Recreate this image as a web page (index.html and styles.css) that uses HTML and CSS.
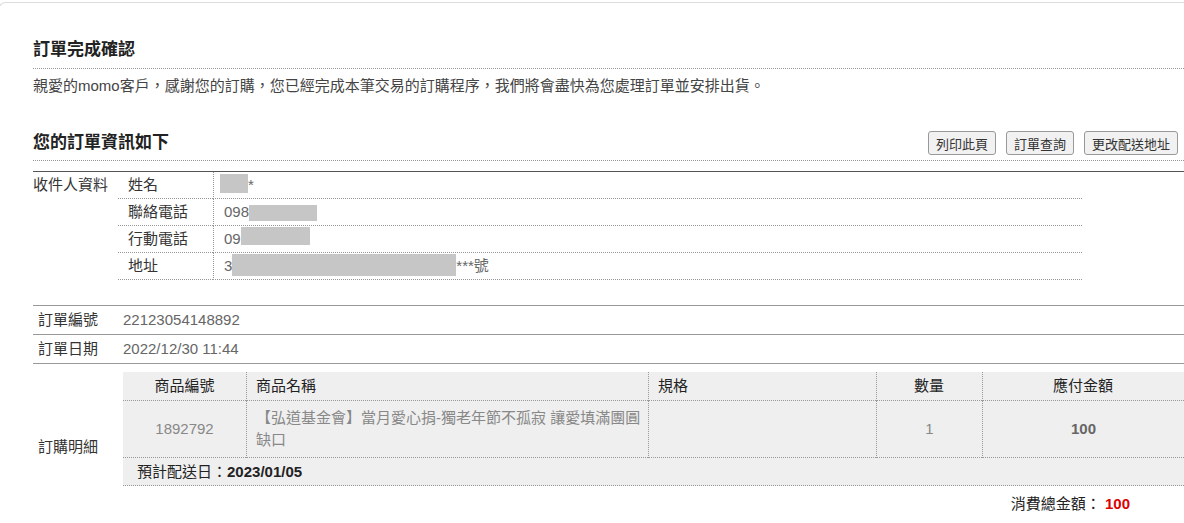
FILE: index.html
```html
<!DOCTYPE html>
<html lang="zh-Hant">
<head>
  <meta charset="UTF-8" />
  <meta name="viewport" content="width=device-width, initial-scale=1.0"/>
  <title>訂單完成確認</title>
  <link rel="stylesheet" href="styles.css">
</head>
<body>

  <div class="page">

    <h2 class="page-title">訂單完成確認</h2>
    <p class="intro">親愛的momo客戶，感謝您的訂購，您已經完成本筆交易的訂購程序，我們將會盡快為您處理訂單並安排出貨。</p>

    <div class="info-head">
      <h3>您的訂單資訊如下</h3>
      <div class="actions">
        <button type="button" class="btn">列印此頁</button>
        <button type="button" class="btn">訂單查詢</button>
        <button type="button" class="btn">更改配送地址</button>
      </div>
    </div>

    <div class="receiver-box">
      <table class="receiver">
        <colgroup>
          <col class="c-group">
          <col class="c-key">
          <col>
        </colgroup>
        <tr>
          <td class="group" rowspan="4">收件人資料</td>
          <td class="key">姓名</td>
          <td class="val"><span class="mask mask-name"></span>*</td>
        </tr>
        <tr>
          <td class="key">聯絡電話</td>
          <td class="val">098<span class="mask mask-phone"></span></td>
        </tr>
        <tr>
          <td class="key">行動電話</td>
          <td class="val">09<span class="mask mask-mobile"></span></td>
        </tr>
        <tr>
          <td class="key">地址</td>
          <td class="val">3<span class="mask mask-addr"></span>***號</td>
        </tr>
      </table>
    </div>

    <table class="order">
      <colgroup>
        <col class="c-label">
        <col>
      </colgroup>
      <tr>
        <td class="label">訂單編號</td>
        <td class="value">22123054148892</td>
      </tr>
      <tr>
        <td class="label">訂單日期</td>
        <td class="value">2022/12/30 11:44</td>
      </tr>
      <tr>
        <td class="label">訂購明細</td>
        <td class="detail">
          <table class="items">
            <colgroup>
              <col class="c-no">
              <col class="c-name">
              <col class="c-spec">
              <col class="c-qty">
              <col>
            </colgroup>
            <thead>
              <tr>
                <th class="center">商品編號</th>
                <th>商品名稱</th>
                <th>規格</th>
                <th class="center">數量</th>
                <th class="center">應付金額</th>
              </tr>
            </thead>
            <tbody>
              <tr class="item">
                <td class="center">1892792</td>
                <td class="name">【弘道基金會】當月愛心捐-獨老年節不孤寂 讓愛填滿團圓缺口</td>
                <td></td>
                <td class="center">1</td>
                <td class="center price">100</td>
              </tr>
              <tr>
                <td class="ship" colspan="5">預計配送日：<b>2023/01/05</b></td>
              </tr>
            </tbody>
          </table>
          <div class="total">消費總金額： <b>100</b></div>
        </td>
      </tr>
    </table>

  </div>

</body>
</html>
```

FILE: styles.css
```css
body {
  margin: 0;
  font-family: "Liberation Sans", "Noto Sans CJK TC", sans-serif;
  font-size: 15px;
  color: #333;
  background: #fff;
}

.page {
  margin: 2px 0 0 -2px;
  padding-left: 34px;
  border-top: 1px solid #ddd;
  border-left: 1px solid #ddd;
  border-top-left-radius: 8px;
}

.page-title {
  margin: 35px 0 0;
  padding-bottom: 6px;
  font-size: 17px;
  line-height: 24px;
  color: #222;
  border-bottom: 1px dotted #999;
}

.intro {
  margin: 7px 0 0;
  line-height: 20px;
  color: #444;
}

.info-head {
  display: flex;
  align-items: center;
  justify-content: space-between;
  margin-top: 35px;
  padding: 0 6px 5px 0;
  border-bottom: 1px dotted #999;
}

.info-head h3 {
  margin: 0;
  font-size: 17px;
  line-height: 24px;
  color: #222;
}

.actions {
  display: flex;
}

.btn {
  height: 24px;
  margin-left: 10px;
  padding: 0 7px;
  font-family: inherit;
  font-size: 13px;
  color: #333;
  background: #f1f1f1;
  border: 1px solid #999;
  border-radius: 3px;
  cursor: pointer;
}

.btn:hover {
  background: #e4e4e4;
}

/* 收件人資料 */
.receiver-box {
  margin-top: 10px;
  border-top: 1px solid #555;
}

.receiver {
  width: 1049px;
  border-collapse: separate;
  border-spacing: 0;
  table-layout: fixed;
}

.receiver .c-group { width: 85px; }
.receiver .c-key { width: 95px; }

.receiver td {
  padding: 0;
  line-height: 26px;
}

.receiver .group {
  vertical-align: top;
}

.receiver .key {
  padding-left: 10px;
  border-bottom: 1px dotted #999;
}

.receiver .val {
  padding-left: 10px;
  color: #666;
  border-left: 1px dotted #999;
  border-bottom: 1px dotted #999;
}

.mask {
  display: inline-block;
  background: #c6c6c6;
}

.mask-name { width: 28px; height: 19px; margin-left: -4px; vertical-align: -3px; }
.mask-phone { width: 68px; height: 16px; vertical-align: -4px; }
.mask-mobile { width: 69px; height: 18px; vertical-align: -1px; }
.mask-addr { width: 224px; height: 22px; vertical-align: -5px; }

/* 訂單資料 */
.order {
  width: 100%;
  margin-top: 25px;
  border-collapse: collapse;
  border-top: 1px solid #999;
  table-layout: fixed;
}

.order .c-label { width: 90px; }

.order > tbody > tr {
  border-bottom: 1px solid #999;
}

.order > tbody > tr:last-child {
  border-bottom: none;
}

.order td {
  padding: 0;
  line-height: 28px;
}

.order .label {
  padding-left: 5px;
  vertical-align: middle;
}

.order .value {
  color: #666;
}

.order .detail {
  padding: 8px 0 15px;
}

/* 商品明細 */
.items {
  width: 100%;
  background: #efefef;
  border-collapse: separate;
  border-spacing: 0;
  table-layout: fixed;
}

.items .c-no { width: 123px; }
.items .c-name { width: 402px; }
.items .c-spec { width: 228px; }
.items .c-qty { width: 106px; }

.items th {
  padding: 0 10px;
  font-weight: normal;
  line-height: 28px;
  color: #222;
  text-align: left;
  border-bottom: 1px dotted #999;
}

.items th + th,
.items .item td + td {
  border-left: 1px dotted #999;
}

.items th + th {
  padding-left: 9px;
}

.items .center {
  text-align: center;
}

.items .item td {
  height: 50px;
  padding: 0 10px;
  color: #888;
  line-height: 22px;
  border-bottom: 1px dotted #999;
  vertical-align: middle;
}

.items .item .name {
  padding: 3px 0 3px 9px;
}

.items .item .price {
  font-weight: bold;
  color: #666;
}

.items .ship {
  padding-left: 14px;
  line-height: 27px;
  color: #222;
  border-bottom: 1px dotted #999;
}

.total {
  margin-top: 8px;
  padding-right: 54px;
  line-height: 20px;
  text-align: right;
  color: #222;
}

.total b {
  color: #d00;
}
```
